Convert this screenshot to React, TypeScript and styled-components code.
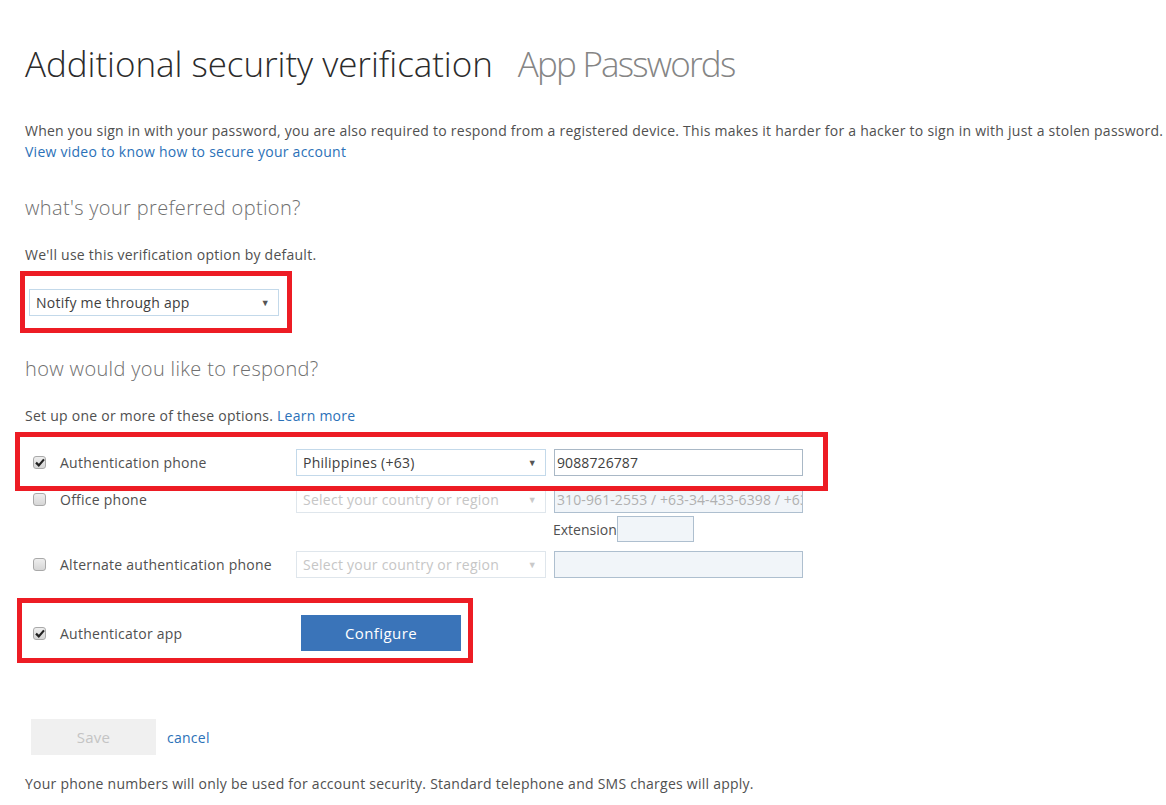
import React from 'react';
import styled, { createGlobalStyle } from 'styled-components';

const GlobalStyle = createGlobalStyle`
  html, body {
    margin: 0;
    padding: 0;
    background: #fff;
  }
  body {
    font-family: "Open Sans", "Noto Sans", "Liberation Sans", sans-serif;
    font-size: 14px;
    letter-spacing: 0.25px;
    color: #505050;
  }
`

const Page = styled.div`
  position: relative;
  width: 1166px;
  min-height: 805px;
  padding: 0 0 0 25px;
  box-sizing: border-box;
  overflow: hidden;
`

const TitleRow = styled.h1`
  margin: 42px 0 0 0;
  font-size: 35px;
  line-height: 44px;
  font-weight: 300;
  letter-spacing: -0.05px;
  color: #2b2b2b;
  white-space: nowrap;
`

const SubTitle = styled.span`
  margin-left: 25px;
  letter-spacing: -1.8px;
  color: #858585;
`

const Intro = styled.p`
  margin: 34px 0 0 0;
  line-height: 21px;
  white-space: nowrap;
`

const Link = styled.a`
  color: #2b71b8;
  text-decoration: none;
  cursor: pointer;
`

const SectionHeading = styled.h2<{ $top: number }>`
  margin: ${p => p.$top}px 0 0 0;
  font-size: 20px;
  line-height: 28px;
  font-weight: 300;
  letter-spacing: 0.35px;
  color: #6f6f6f;
`

const Hint = styled.p`
  margin: 23px 0 0 0;
  line-height: 20px;
`

const SelectBox = styled.div<{ $width: number; $disabled?: boolean; $height?: number }>`
  display: flex;
  align-items: center;
  justify-content: space-between;
  width: ${p => p.$width}px;
  height: ${p => p.$height ?? 27}px;
  box-sizing: border-box;
  padding: 0 8px 0 6px;
  border: 1px solid ${p => (p.$disabled ? '#dfe6ec' : '#c3d9ea')};
  background: #fff;
  color: ${p => (p.$disabled ? '#c6c6c6' : '#404040')};
  white-space: nowrap;
  overflow: hidden;
`

const Arrow = styled.span<{ $disabled?: boolean }>`
  font-size: 9px;
  color: ${p => (p.$disabled ? '#c9c9c9' : '#555')};
`

const PreferredSelect = styled.div`
  margin: 24px 0 0 4px;
`

const OptionRow = styled.div<{ $top: number }>`
  display: flex;
  align-items: center;
  margin-top: ${p => p.$top}px;
`

const CheckCell = styled.div`
  width: 35px;
  padding-left: 8px;
  box-sizing: border-box;
  display: flex;
  align-items: center;
`

const Check = styled.span`
  width: 13px;
  height: 13px;
  box-sizing: border-box;
  border: 1px solid #a9a9a9;
  border-radius: 3px;
  background: linear-gradient(#eeeeee, #d6d6d6);
  display: flex;
  align-items: center;
  justify-content: center;
`

const OptionLabel = styled.span`
  width: 236px;
  color: #505050;
`

const PhoneInput = styled.div<{ $disabled?: boolean; $width?: number; $height?: number }>`
  width: ${p => p.$width ?? 249}px;
  height: ${p => p.$height ?? 27}px;
  margin-left: ${p => (p.$width ? 0 : 8)}px;
  box-sizing: border-box;
  padding: 0 2px;
  display: flex;
  align-items: center;
  border: 1px solid ${p => (p.$disabled ? '#aebfcf' : '#a9b8c6')};
  background: ${p => (p.$disabled ? '#f1f5f9' : '#fff')};
  color: ${p => (p.$disabled ? '#b0b0b0' : '#404040')};
  letter-spacing: 0.1px;
  white-space: nowrap;
  overflow: hidden;
`

const ExtensionRow = styled.div`
  display: flex;
  align-items: center;
  margin: 3px 0 0 528px;
  letter-spacing: 0;
  color: #505050;
`

const ConfigureButton = styled.button`
  width: 160px;
  height: 36px;
  margin-left: 5px;
  border: none;
  background: #3a74b9;
  color: #fff;
  font-family: inherit;
  font-size: 15px;
  letter-spacing: 0.4px;
  cursor: pointer;
`

const ActionRow = styled.div`
  display: flex;
  align-items: center;
  margin: 68px 0 0 6px;
  gap: 11px;
`

const SaveButton = styled.button`
  width: 125px;
  height: 36px;
  border: none;
  background: #f0f0f0;
  color: #c4c4c4;
  font-family: inherit;
  font-size: 15px;
  letter-spacing: 0.3px;
`

const Footer = styled.p`
  margin: 19px 0 0 0;
  line-height: 20px;
`

const Highlight = styled.div<{ $x: number; $y: number; $w: number; $h: number }>`
  position: absolute;
  left: ${p => p.$x}px;
  top: ${p => p.$y}px;
  width: ${p => p.$w}px;
  height: ${p => p.$h}px;
  box-sizing: border-box;
  border: 5px solid #ed1c24;
  pointer-events: none;
`

const CheckMark = () => (
  <svg width="10" height="9" viewBox="0 0 10 9">
    <path d="M1 4.6 L3.8 7.4 L9 1.4" fill="none" stroke="#222" strokeWidth="2.2" />
  </svg>
)

const Checkbox: React.FC<{ checked?: boolean }> = ({ checked }) => (
  <CheckCell>
    <Check>{checked ? <CheckMark /> : null}</Check>
  </CheckCell>
)

const CountrySelect: React.FC<{ value?: string }> = ({ value }) => (
  <SelectBox $width={250} $disabled={!value}>
    {value ?? 'Select your country or region'}
    <Arrow $disabled={!value}>▼</Arrow>
  </SelectBox>
)

export default function App() {
  return (
    <Page>
      <GlobalStyle />
      <TitleRow>
        Additional security verification<SubTitle>App Passwords</SubTitle>
      </TitleRow>
      <Intro>
        When you sign in with your password, you are also required to respond from a registered device. This makes it harder for a hacker to sign in with just a stolen password.
        <br />
        <Link>View video to know how to secure your account</Link>
      </Intro>

      <SectionHeading $top={32}>what's your preferred option?</SectionHeading>
      <Hint>We'll use this verification option by default.</Hint>
      <PreferredSelect>
        <SelectBox $width={250}>
          Notify me through app
          <Arrow>▼</Arrow>
        </SelectBox>
      </PreferredSelect>

      <SectionHeading $top={39}>how would you like to respond?</SectionHeading>
      <Hint>
        Set up one or more of these options. <Link>Learn more</Link>
      </Hint>

      <OptionRow $top={23}>
        <Checkbox checked />
        <OptionLabel>Authentication phone</OptionLabel>
        <CountrySelect value="Philippines (+63)" />
        <PhoneInput>9088726787</PhoneInput>
      </OptionRow>
      <OptionRow $top={10}>
        <Checkbox />
        <OptionLabel>Office phone</OptionLabel>
        <CountrySelect />
        <PhoneInput $disabled>310-961-2553 / +63-34-433-6398 / +63-2</PhoneInput>
      </OptionRow>
      <ExtensionRow>
        Extension
        <PhoneInput $disabled $width={77} $height={26} />
      </ExtensionRow>
      <OptionRow $top={9}>
        <Checkbox />
        <OptionLabel>Alternate authentication phone</OptionLabel>
        <CountrySelect />
        <PhoneInput $disabled />
      </OptionRow>
      <OptionRow $top={37}>
        <Checkbox checked />
        <OptionLabel>Authenticator app</OptionLabel>
        <ConfigureButton>Configure</ConfigureButton>
      </OptionRow>

      <ActionRow>
        <SaveButton disabled>Save</SaveButton>
        <Link>cancel</Link>
      </ActionRow>
      <Footer>
        Your phone numbers will only be used for account security. Standard telephone and SMS charges will apply.
      </Footer>

      <Highlight $x={20} $y={271} $w={272} $h={62} />
      <Highlight $x={15} $y={432} $w={813} $h={59} />
      <Highlight $x={17} $y={598} $w={456} $h={65} />
    </Page>
  );
}
